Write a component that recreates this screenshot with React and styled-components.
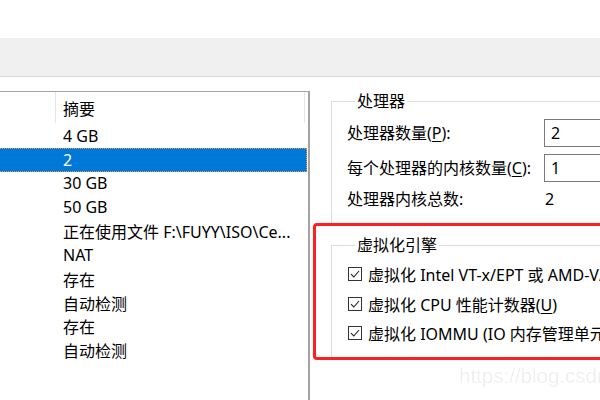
import React from 'react';
import styled, { createGlobalStyle } from 'styled-components';

const GlobalStyle = createGlobalStyle`
  html, body {
    margin: 0;
    padding: 0;
    background: #ffffff;
  }
  body {
    font-family: "Noto Sans", "Noto Sans CJK SC", sans-serif;
    font-size: 16px;
    color: #000000;
  }
`;

const Page = styled.div`
  position: relative;
  width: 600px;
  height: 400px;
  overflow: hidden;
  background: #ffffff;
  display: flex;
  flex-direction: column;
`;

const TitleStrip = styled.div`
  height: 38px;
  flex: none;
  background: #ffffff;
`;

const ToolBand = styled.div`
  height: 38px;
  flex: none;
  background: #f0f0f0;
  border-bottom: 1px solid #d9d9d9;
`;

const Body = styled.div`
  flex: 1;
  display: flex;
  padding-top: 14px;
  min-height: 0;
`;

const SummaryList = styled.div`
  flex: none;
  width: 309px;
  margin-left: -2px;
  border: 1px solid #a3a3a3;
  border-bottom: none;
  border-right: 2px solid #a3a3a3;
  background: #ffffff;
`;

const HeaderRow = styled.div`
  display: grid;
  grid-template-columns: 57px 1fr 3px;
  height: 32px;
`;

const HeaderCell = styled.div`
  display: flex;
  align-items: center;
  padding-left: ${(p) => (p.$text ? '7px' : '0')};
  border-right: ${(p) => (p.$divider ? '1px solid #e5e5e5' : 'none')};
  margin-bottom: 1px;
`;

const ItemRow = styled.div`
  display: grid;
  grid-template-columns: 57px 1fr;
  height: 23.8px;
  align-items: center;
  white-space: nowrap;
  background: ${(p) => (p.$selected ? '#0078d7' : 'transparent')};
  color: ${(p) => (p.$selected ? '#ffffff' : '#000000')};
  outline: ${(p) => (p.$selected ? '1px dotted #e39a4c' : 'none')};
  outline-offset: -1px;
  margin-right: 1px;
`;

const ItemText = styled.span`
  grid-column: 2;
  padding-left: 7px;
`;

const Settings = styled.div`
  flex: 1;
  display: flex;
  flex-direction: column;
  padding-left: 21px;
  min-width: 0;
`;

const Group = styled.fieldset`
  margin: ${(p) => p.$top || '0'} -60px 0 0;
  padding: ${(p) => p.$pad};
  border: 1px solid #dcdcdc;
  min-width: 0;
`;

const Legend = styled.legend`
  margin-left: 8px;
  padding: 0 2px;
  line-height: 20px;
  height: 20px;
`;

const FieldGrid = styled.div`
  display: grid;
  grid-template-columns: 197px 1fr;
  row-gap: 7px;
  align-items: center;
`;

const FieldLabel = styled.div`
  white-space: nowrap;
  height: ${(p) => (p.$short ? '20px' : '28px')};
  line-height: ${(p) => (p.$short ? '20px' : '28px')};
`;

const Acc = styled.span`
  text-decoration: underline;
  text-underline-offset: 2px;
`;

const NumberBox = styled.div`
  box-sizing: border-box;
  height: 28px;
  width: 120px;
  border: 1px solid #7a7a7a;
  padding-left: 6px;
  line-height: 26px;
  background: #ffffff;
`;

const PlainValue = styled.div`
  padding-left: 1px;
  line-height: 20px;
`;

const CheckList = styled.div`
  display: flex;
  flex-direction: column;
  gap: 5.5px;
`;

const CheckRow = styled.label`
  display: flex;
  align-items: center;
  gap: 5px;
  height: 24px;
  white-space: nowrap;
`;

const Box = styled.svg`
  flex: none;
  width: 16px;
  height: 16px;
  display: block;
`;

const Annotation = styled.div`
  position: absolute;
  left: 313px;
  top: 223px;
  width: 320px;
  height: 137px;
  box-sizing: border-box;
  border: 3px solid #ff1f1f;
  border-radius: 4px;
  pointer-events: none;
`;

const Watermark = styled.div`
  position: absolute;
  left: 459px;
  top: 362px;
  font-family: "Liberation Sans", Arial, sans-serif;
  font-size: 20.5px;
  line-height: 28px;
  color: rgba(0, 0, 0, 0.075);
  white-space: nowrap;
  pointer-events: none;
`;

const summary = [
  '4 GB',
  '2',
  '30 GB',
  '50 GB',
  '正在使用文件 F:\\FUYY\\ISO\\Ce...',
  'NAT',
  '存在',
  '自动检测',
  '存在',
  '自动检测',
];

const checks = [
  '虚拟化 Intel VT-x/EPT 或 AMD-V/RVI(V)',
  <>虚拟化 CPU 性能计数器(<Acc>U</Acc>)</>,
  '虚拟化 IOMMU (IO 内存管理单元)(I)',
];

function CheckGlyph() {
  return (
    <Box viewBox="0 0 16 16">
      <rect x="1.5" y="1.5" width="13" height="13" fill="#ffffff" stroke="#333333" />
      <path d="M4 8.2 L6.8 11 L12 5" fill="none" stroke="#222222" strokeWidth="1.1" />
    </Box>
  );
}

export default function App() {
  return (
    <>
      <GlobalStyle />
      <Page>
        <TitleStrip />
        <ToolBand />
        <Body>
          <SummaryList>
            <HeaderRow>
              <HeaderCell $divider />
              <HeaderCell $text $divider>摘要</HeaderCell>
              <HeaderCell />
            </HeaderRow>
            {summary.map((item, i) => (
              <ItemRow key={i} $selected={i === 1}>
                <ItemText>{item}</ItemText>
              </ItemRow>
            ))}
          </SummaryList>
          <Settings>
            <Group $pad="8px 0 15px 15px">
              <Legend>处理器</Legend>
              <FieldGrid>
                <FieldLabel>
                  处理器数量(<Acc>P</Acc>):
                </FieldLabel>
                <NumberBox>2</NumberBox>
                <FieldLabel>
                  每个处理器的内核数量(<Acc>C</Acc>):
                </FieldLabel>
                <NumberBox>1</NumberBox>
                <FieldLabel $short>处理器内核总数:</FieldLabel>
                <PlainValue>2</PlainValue>
              </FieldGrid>
            </Group>
            <Group $top="10px" $pad="7px 0 13px 15px">
              <Legend>虚拟化引擎</Legend>
              <CheckList>
                {checks.map((text, i) => (
                  <CheckRow key={i}>
                    <CheckGlyph />
                    <span>{text}</span>
                  </CheckRow>
                ))}
              </CheckList>
            </Group>
          </Settings>
        </Body>
        <Annotation />
        <Watermark>https://blog.csdn.net/</Watermark>
      </Page>
    </>
  );
}
